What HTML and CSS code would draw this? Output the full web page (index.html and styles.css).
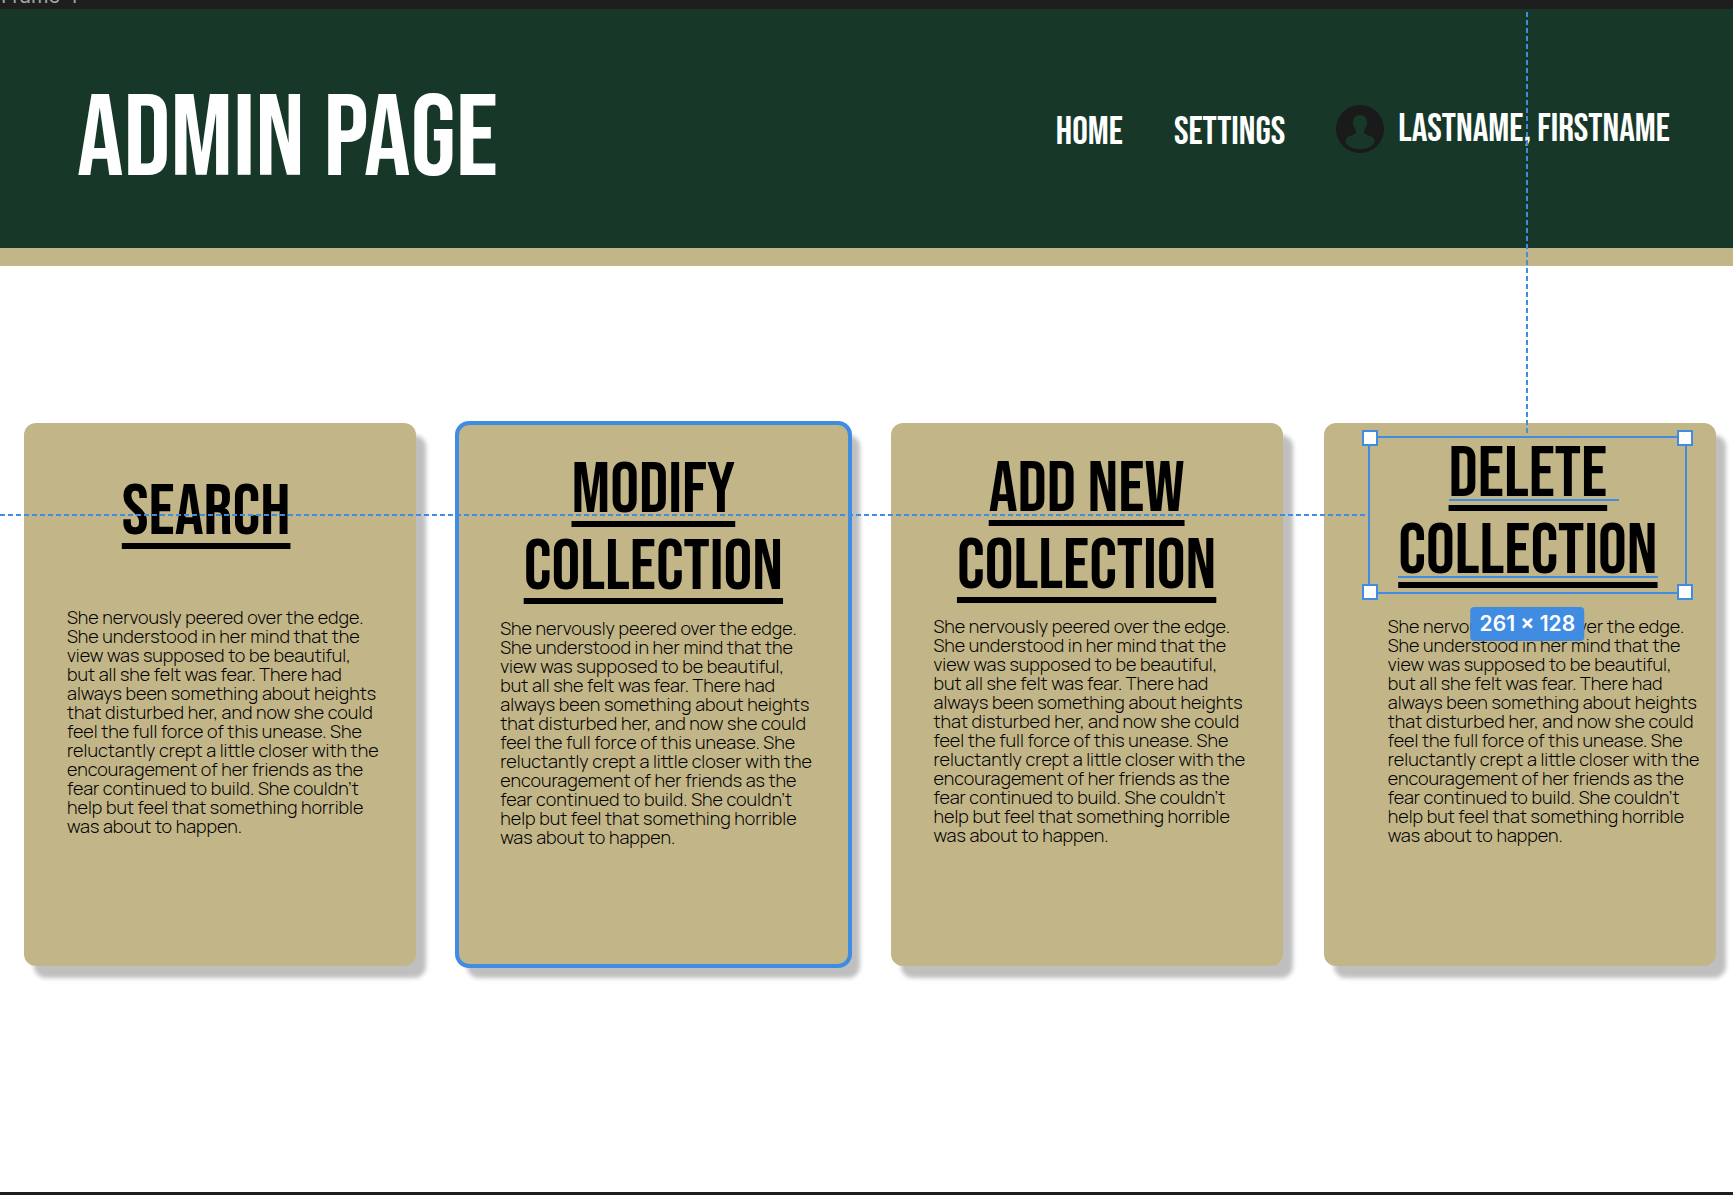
FILE: index.html
```html
<!DOCTYPE html>
<html lang="en">
<head>
<meta charset="utf-8">
<title>Admin Page</title>
<link rel="stylesheet" href="styles.css">
</head>
<body>
<div class="canvas-bar"><span class="frame-label">Frame 4</span></div>
<div class="frame">
  <header class="header">
    <h1 class="title">ADMIN PAGE</h1>
    <nav class="nav">
      <a href="#" class="link">HOME</a>
      <a href="#" class="link">SETTINGS</a>
      <a href="#" class="profile">
        <svg class="avatar" viewBox="0 0 48 48" aria-hidden="true">
          <circle cx="24" cy="24" r="24" fill="#1a1a1a"/>
          <path class="person" d="M24 10c-4.400 0-6.800 2.800-6.800 6.800 0 1-.5 1.300-.3 2.400.2 1.200.8 1.500 1 2.400.5 2.200 2 3 2 4.900 0 2.600-2 3-4.700 4-3.600 1.300-5.700 3-5.700 5.700C9.500 40.500 16 44 24 44s14.500-3.500 14.500-7.800c0-2.700-2.100-4.400-5.700-5.700-2.700-1-4.700-1.400-4.700-4 0-1.900 1.500-2.700 2-4.900.2-.9.8-1.200 1-2.400.2-1.100-.3-1.400-.3-2.400C30.800 12.800 28.400 10 24 10z"/>
        </svg>
        <span>LASTNAME, FIRSTNAME</span>
      </a>
    </nav>
  </header>
  <main class="cards">
    <section class="card card-search">
      <h2>SEARCH</h2>
      <p>She nervously peered over the edge.<br>She understood in her mind that the<br>view was supposed to be beautiful,<br>but all she felt was fear. There had<br>always been something about heights<br>that disturbed her, and now she could<br>feel the full force of this unease. She<br>reluctantly crept a little closer with the<br>encouragement of her friends as the<br>fear continued to build. She couldn’t<br>help but feel that something horrible<br>was about to happen.</p>
    </section>
    <section class="card card-modify">
      <h2>MODIFY<br>COLLECTION</h2>
      <p>She nervously peered over the edge.<br>She understood in her mind that the<br>view was supposed to be beautiful,<br>but all she felt was fear. There had<br>always been something about heights<br>that disturbed her, and now she could<br>feel the full force of this unease. She<br>reluctantly crept a little closer with the<br>encouragement of her friends as the<br>fear continued to build. She couldn’t<br>help but feel that something horrible<br>was about to happen.</p>
    </section>
    <section class="card card-add">
      <h2>ADD NEW<br>COLLECTION</h2>
      <p>She nervously peered over the edge.<br>She understood in her mind that the<br>view was supposed to be beautiful,<br>but all she felt was fear. There had<br>always been something about heights<br>that disturbed her, and now she could<br>feel the full force of this unease. She<br>reluctantly crept a little closer with the<br>encouragement of her friends as the<br>fear continued to build. She couldn’t<br>help but feel that something horrible<br>was about to happen.</p>
    </section>
    <section class="card card-delete">
      <h2><span class="line line-short">DELETE</span><span class="line">COLLECTION</span></h2>
      <p>She nervously peered over the edge.<br>She understood in her mind that the<br>view was supposed to be beautiful,<br>but all she felt was fear. There had<br>always been something about heights<br>that disturbed her, and now she could<br>feel the full force of this unease. She<br>reluctantly crept a little closer with the<br>encouragement of her friends as the<br>fear continued to build. She couldn’t<br>help but feel that something horrible<br>was about to happen.</p>
      <div class="selection">
        <i class="guide guide-x"></i>
        <i class="guide guide-y"></i>
        <i class="handle nw"></i><i class="handle ne"></i><i class="handle sw"></i><i class="handle se"></i>
        <span class="size">261 × 128</span>
      </div>
    </section>
  </main>
</div>
</body>
</html>
```
FILE: styles.css
```css
:root {
  --green: #173829;
  --gold: #c2b587;
  --blue: #3f8ce2;
  --ink: #1e1e1e;
}

* { box-sizing: border-box; }

body {
  margin: 0;
  min-height: 100vh;
  display: flex;
  flex-direction: column;
  background: var(--ink);
  color: #000;
  font-family: Manrope, Inter, sans-serif;
}

/* editor canvas above the frame */
.canvas-bar {
  height: 9px;
  display: flex;
  align-items: flex-end;
  overflow: hidden;
}

.frame-label {
  color: #a6a6a6;
  font: 20px/22px Inter, sans-serif;
  padding: 0 0 2px 1px;
}

.frame {
  flex: 1;
  margin-bottom: 3px;
  background: #fff;
  overflow: hidden;
}

.header {
  display: flex;
  justify-content: space-between;
  align-items: center;
  height: 257px;
  padding: 0 63px 0 77px;
  background: var(--green);
  border-bottom: 18px solid var(--gold);
  color: #fff;
  font-family: "Bebas Neue", "Open Sans Condensed", sans-serif;
}

.title {
  margin: 0;
  padding-top: 24px;
  font-size: 116px;
  font-weight: 400;
  line-height: 116px;
}

.nav {
  display: flex;
  align-items: center;
  gap: 51px;
  font-size: 39px;
  line-height: 48px;
}

.nav a {
  color: inherit;
  text-decoration: none;
}

.link { padding-top: 8px; }

.profile {
  display: flex;
  align-items: center;
  gap: 14px;
}

.profile span { padding-top: 2px; }

.avatar {
  width: 48px;
  height: 48px;
}

.person { fill: var(--green); }

.cards {
  display: grid;
  grid-template-columns: repeat(4, 1fr);
  gap: 41px;
  padding: 157px 17px 0 24px;
}

.card {
  position: relative;
  min-height: 543px;
  border-radius: 12px;
  background: var(--gold);
  box-shadow: 10px 12px 4px rgba(0, 0, 0, .25);
}

.card h2 {
  margin: 0;
  font-family: "Bebas Neue", "Open Sans Condensed", sans-serif;
  font-size: 72px;
  font-weight: 400;
  line-height: 77px;
  text-align: center;
  text-decoration: underline;
  text-decoration-thickness: 6px;
  text-underline-offset: 9px;
  text-decoration-skip-ink: none;
}

.card p {
  margin: 0;
  padding-left: 43px;
  font-size: 18px;
  font-weight: 300;
  line-height: 19px;
  white-space: nowrap;
}

.card-search { padding-top: 51px; }
.card-search h2 { padding-right: 28px; }
.card-search p { padding-top: 57px; }

.card-modify {
  padding-top: 29px;
  outline: 4px solid var(--blue);
  outline-offset: -2px;
}
.card-modify p { padding-top: 13px; }

.card-add { padding-top: 28px; }
.card-add p { padding-top: 12px; }

.card-delete { padding-top: 13px; }
.card-delete h2 { padding-left: 16px; }
.card-delete p { padding: 27px 0 0 64px; }

/* selected text shows a thin baseline rule under each line */
.line {
  position: relative;
  display: block;
  width: fit-content;
  margin: 0 auto;
}

.line::after {
  content: "";
  position: absolute;
  top: 63px;
  left: 0;
  right: 0;
  height: 2px;
  background: var(--blue);
}

.line-short::after { right: -12px; }

/* selection overlay around the last card title */
.selection {
  position: absolute;
  top: 13px;
  left: 44px;
  right: 29px;
  height: 158px;
  border: 2px solid var(--blue);
}

.handle {
  position: absolute;
  width: 16px;
  height: 16px;
  background: #fff;
  border: 2px solid var(--blue);
}

.nw { top: -8px; left: -8px; }
.ne { top: -8px; right: -8px; }
.sw { bottom: -8px; left: -8px; }
.se { bottom: -8px; right: -8px; }

.guide { position: absolute; }

.guide-x {
  right: calc(100% + 2px);
  top: 76px;
  width: 120vw;
  height: 2px;
  background: repeating-linear-gradient(to left, transparent 0 3px, var(--blue) 3px 8px);
}

.guide-y {
  bottom: calc(100% + 2px);
  left: 50%;
  width: 2px;
  height: 100vh;
  margin-left: -1px;
  background: repeating-linear-gradient(to top, transparent 0 3px, var(--blue) 3px 8px);
}

.size {
  position: absolute;
  top: 169px;
  left: 50%;
  transform: translateX(-50%);
  padding: 0 9px;
  border-radius: 4px;
  background: var(--blue);
  color: #fff;
  font: 600 21px/34px Inter, sans-serif;
  white-space: nowrap;
}
```
